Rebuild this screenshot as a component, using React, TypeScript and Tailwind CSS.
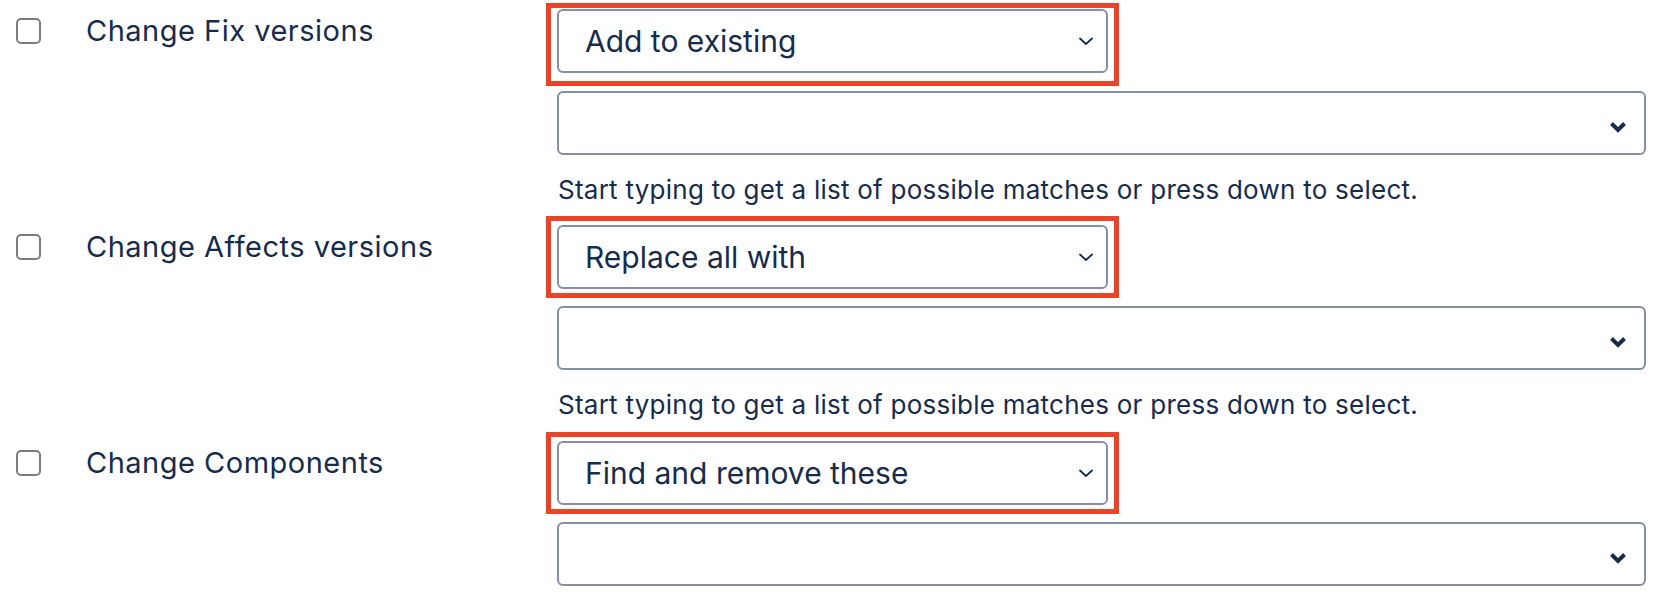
import React from "react";

type RowProps = {
  label: string;
  value: string;
  first?: boolean;
  last?: boolean;
};

function ThinChevron() {
  return (
    <svg width="16" height="10" viewBox="0 0 16 10" fill="none">
      <path d="M2 2.5 L8 8 L14 2.5" stroke="#172B4D" strokeWidth="1.8" strokeLinecap="round" strokeLinejoin="round" />
    </svg>
  );
}

function BoldChevron() {
  return (
    <svg width="18" height="12" viewBox="0 0 18 12" fill="none">
      <path d="M2.5 2.5 L9 9 L15.5 2.5" stroke="#172B4D" strokeWidth="4" strokeLinecap="butt" strokeLinejoin="miter" />
    </svg>
  );
}

function Row({ label, value, first, last }: RowProps) {
  return (
    <div className="flex h-[216px]">
      <div className="w-[546px] shrink-0 flex items-start">
        <div className="ml-[16px] mt-[18px] w-[25px] h-[26px] rounded-[5px] border-2 border-[#7d7d7d] bg-white shrink-0" />
        <div className="ml-[45px] mt-[15px] text-[29px] leading-[32px] tracking-[0.5px] text-[#172B4D] whitespace-nowrap">{label}</div>
      </div>
      <div className="flex flex-col items-start">
        <div
          className={
            first
              ? "mt-[3px] border-[5px] border-[#e9432a] pt-[1px] pb-[8px] px-[6px]"
              : "border-[5px] border-[#e9432a] py-[4px] px-[6px]"
          }
        >
          <div className="w-[551px] h-[64px] rounded-[6px] border-2 border-[#8590A2] bg-white flex items-center justify-between pl-[26px] pr-[12px]">
            <span className="text-[30px] leading-none text-[#172B4D] whitespace-nowrap">{value}</span>
            <ThinChevron />
          </div>
        </div>
        <div
          className={
            (first ? "mt-[5px]" : "mt-[8px]") +
            " ml-[11px] w-[1089px] h-[64px] rounded-[6px] border-2 border-[#8590A2] bg-white flex items-center justify-end pr-[17px] pt-[7px]"
          }
        >
          <BoldChevron />
        </div>
        {!last && (
          <div className="ml-[12px] mt-[19px] text-[26px] leading-[32px] tracking-[0.25px] text-[#172B4D] whitespace-nowrap">
            Start typing to get a list of possible matches or press down to select.
          </div>
        )}
      </div>
    </div>
  );
}

export default function App() {
  return (
    <div className="w-[1664px] h-[600px] overflow-hidden bg-white font-['Inter','Noto_Sans',sans-serif]">
      <Row label="Change Fix versions" value="Add to existing" first />
      <Row label="Change Affects versions" value="Replace all with" />
      <Row label="Change Components" value="Find and remove these" last />
    </div>
  );
}
